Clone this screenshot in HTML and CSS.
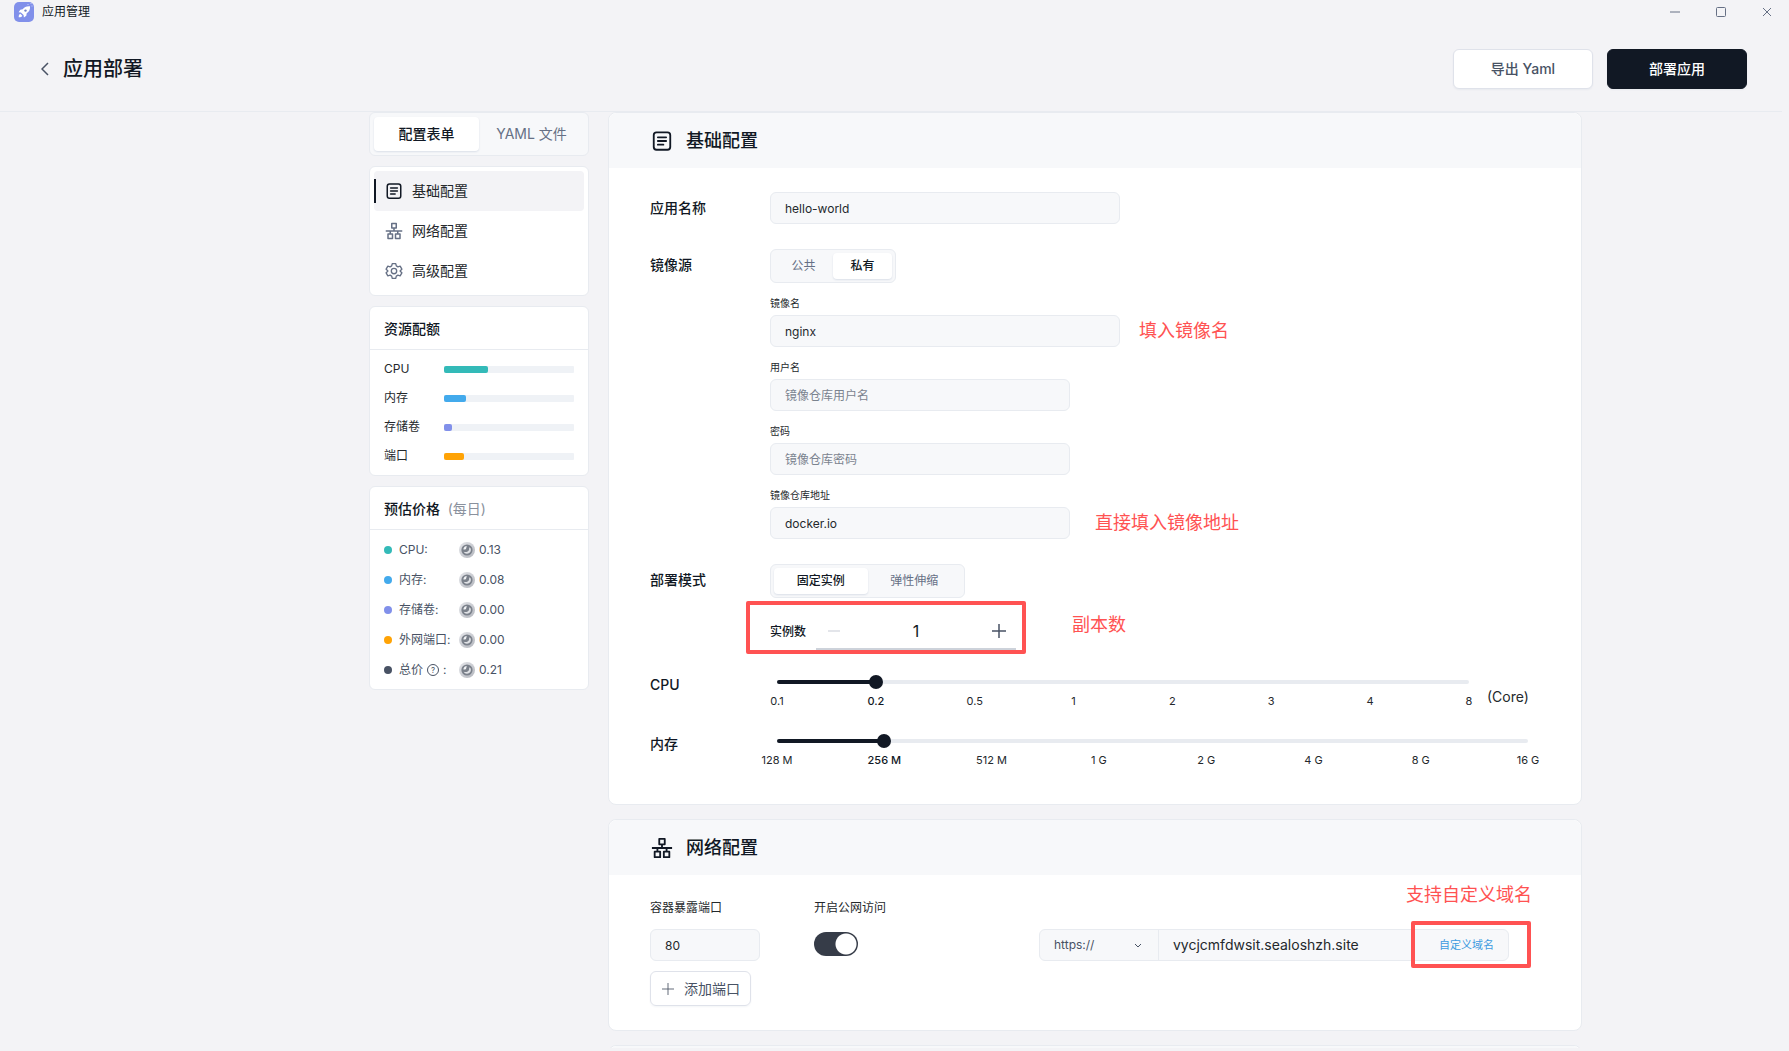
FILE: index.html
```html
<!DOCTYPE html>
<html lang="zh-CN">

<head>
   <meta charset="UTF-8">
   <meta name="viewport" content="width=device-width, initial-scale=1.0">
   <title>应用管理</title>
   <link rel="stylesheet" href="styles.css">
</head>

<body>
   <!-- shared icons -->
   <svg class="sprite" aria-hidden="true">
      <defs>
         <linearGradient id="coin-rim" x1="0" y1="0" x2="1" y2="1">
            <stop offset="0" stop-color="#e4e5e9"/>
            <stop offset="1" stop-color="#b3b6bd"/>
         </linearGradient>
      </defs>
      <symbol id="icon-form" viewBox="0 0 24 24" fill="none" stroke="currentColor" stroke-width="2" stroke-linecap="round">
         <rect x="3" y="2.5" width="18" height="19" rx="3"/>
         <path d="M7.5 8h9M7.5 12h9M7.5 16h6"/>
      </symbol>
      <symbol id="icon-network" viewBox="0 0 24 24" fill="none" stroke="currentColor" stroke-width="2" stroke-linejoin="round">
         <rect x="9" y="2" width="6" height="6"/>
         <rect x="4" y="16" width="6" height="6"/>
         <rect x="14" y="16" width="6" height="6"/>
         <path d="M12 8v4M1 12h22M7 12v4M17 12v4"/>
      </symbol>
      <symbol id="icon-gear" viewBox="0 0 24 24" fill="none" stroke="currentColor" stroke-width="1.8" stroke-linejoin="round">
         <path d="M9.7 2.2h4.6l.8 3 2.1 1.2 3-.8 2.3 4-2.2 2.1v.6l2.2 2.1-2.3 4-3-.8-2.1 1.2-.8 3H9.700l-.8-3-2.100-1.200-3 .8-2.300-4 2.200-2.100v-.6L1.500 9.600l2.300-4 3 .8 2.100-1.200z"/>
         <circle cx="12" cy="12" r="3.600"/>
      </symbol>
      <symbol id="icon-coin" viewBox="0 0 16 16">
         <circle cx="8" cy="8" r="8" fill="url(#coin-rim)"/>
         <circle cx="8" cy="8" r="5.6" fill="#7b818b"/>
         <path d="M4.300 7.300C4.700 5.200 6.200 4 7.800 4c-.5 1.200-.2 2-.9 2.900-.7.800-1.700.9-2.600.4z" fill="#f1f2f4"/>
         <path d="M11.700 6.500c.8 3-1.100 5.200-3.700 5.200-1.500 0-2.700-.8-3.300-2 2 .7 3.800.4 4.800-.9.800-1 .9-2.200.5-3.400.8.100 1.300.5 1.700 1.100z" fill="#dfe1e5"/>
      </symbol>
      <symbol id="icon-plus" viewBox="0 0 14 14" fill="none" stroke="currentColor">
         <path d="M0 7h14M7 0v14"/>
      </symbol>
   </svg>

   <div class="app">
      <div class="titlebar">
         <svg class="logo" viewBox="0 0 20 20">
            <rect width="20" height="20" rx="5" fill="#8190ea"/>
            <path d="M16 4.200c-3.400-.3-5.700.8-7.300 3.100l-2.400.4-1.700 2.500 2.300.2 2.700 2.700.3 2.400 2.400-1.800.4-2.400C15.200 9.700 16.300 7.500 16 4.200z" fill="#fff"/>
            <circle cx="11.500" cy="8.600" r="1.200" fill="#7181c5"/>
            <path d="M6.300 11.700c-1.200.4-1.600 1.700-1.600 3.600 1.900 0 3.200-.4 3.600-1.600z" fill="#fff"/>
            <path d="M13.500 2.500h1M16.500 1.500h1M17.500 4h1" stroke="#c8cff7"/>
         </svg>
         <span class="app-name">应用管理</span>
         <div class="window-buttons">
            <button aria-label="最小化"><svg viewBox="0 0 10 10"><path d="M0 5h10"/></svg></button>
            <button aria-label="最大化"><svg viewBox="0 0 10 10"><rect x=".5" y=".5" width="9" height="9" rx="1"/></svg></button>
            <button aria-label="关闭"><svg viewBox="0 0 10 10"><path d="M1 1l8 8M9 1l-8 8"/></svg></button>
         </div>
      </div>

      <header class="header">
         <button class="back" aria-label="返回"><svg viewBox="0 0 8 14"><path d="M7 1L1 7l6 6"/></svg></button>
         <h1>应用部署</h1>
         <button class="btn">导出 Yaml</button>
         <button class="btn btn-dark">部署应用</button>
      </header>

      <div class="content">
         <aside class="sidebar">
            <div class="tabs tabs-big">
               <button class="active">配置表单</button>
               <button>YAML 文件</button>
            </div>

            <nav class="box menu">
               <a href="#base" class="active"><svg><use href="#icon-form"/></svg>基础配置</a>
               <a href="#network"><svg><use href="#icon-network"/></svg>网络配置</a>
               <a href="#advanced"><svg><use href="#icon-gear"/></svg>高级配置</a>
            </nav>

            <div class="box">
               <h2>资源配额</h2>
               <div class="quota">
                  <div class="quota-row"><span>CPU</span><div class="bar"><div class="bar-fill cpu" style="width: 34%"></div></div></div>
                  <div class="quota-row"><span>内存</span><div class="bar"><div class="bar-fill memory" style="width: 17%"></div></div></div>
                  <div class="quota-row"><span>存储卷</span><div class="bar"><div class="bar-fill storage" style="width: 6%"></div></div></div>
                  <div class="quota-row"><span>端口</span><div class="bar"><div class="bar-fill port" style="width: 15%"></div></div></div>
               </div>
            </div>

            <div class="box">
               <h2>预估价格 <small>(每日)</small></h2>
               <div class="price">
                  <div class="price-row"><i class="dot cpu"></i><span>CPU:</span><svg><use href="#icon-coin"/></svg>0.13</div>
                  <div class="price-row"><i class="dot memory"></i><span>内存:</span><svg><use href="#icon-coin"/></svg>0.08</div>
                  <div class="price-row"><i class="dot storage"></i><span>存储卷:</span><svg><use href="#icon-coin"/></svg>0.00</div>
                  <div class="price-row"><i class="dot port"></i><span>外网端口:</span><svg><use href="#icon-coin"/></svg>0.00</div>
                  <div class="price-row"><i class="dot total"></i><span>总价<b class="help">?</b>:</span><svg><use href="#icon-coin"/></svg>0.21</div>
               </div>
            </div>
         </aside>

         <main class="main">
            <section class="card" id="base">
               <h2 class="card-title"><svg><use href="#icon-form"/></svg>基础配置</h2>
               <div class="form">
                  <div class="row">
                     <label class="row-label" for="name">应用名称</label>
                     <input class="text wide" id="name" type="text" value="hello-world">
                  </div>

                  <div class="row">
                     <span class="row-label">镜像源</span>
                     <div>
                        <div class="tabs">
                           <button>公共</button>
                           <button class="active">私有</button>
                        </div>
                        <div class="field">
                           <label for="image">镜像名</label>
                           <div class="field-line">
                              <input class="text wide" id="image" type="text" value="nginx">
                              <span class="note">填入镜像名</span>
                           </div>
                        </div>
                        <div class="field">
                           <label for="user">用户名</label>
                           <input class="text" id="user" type="text" placeholder="镜像仓库用户名">
                        </div>
                        <div class="field">
                           <label for="password">密码</label>
                           <input class="text" id="password" type="password" placeholder="镜像仓库密码">
                        </div>
                        <div class="field">
                           <label for="registry">镜像仓库地址</label>
                           <div class="field-line far">
                              <input class="text" id="registry" type="text" value="docker.io">
                              <span class="note">直接填入镜像地址</span>
                           </div>
                        </div>
                     </div>
                  </div>

                  <div class="row">
                     <span class="row-label">部署模式</span>
                     <div>
                        <div class="tabs tabs-mode">
                           <button class="active">固定实例</button>
                           <button>弹性伸缩</button>
                        </div>
                        <div class="count">
                           <label for="count">实例数</label>
                           <div class="stepper">
                              <button class="minus" aria-label="减少" disabled></button>
                              <input id="count" type="text" value="1">
                              <button aria-label="增加"><svg><use href="#icon-plus"/></svg></button>
                           </div>
                           <div class="mark"></div>
                           <span class="note">副本数</span>
                        </div>
                     </div>
                  </div>

                  <div class="row row-slider">
                     <label class="row-label" for="cpu">CPU</label>
                     <div class="slider-line">
                        <div class="slider">
                           <div class="track"><div class="track-fill" style="width: 14.28%"></div></div>
                           <input id="cpu" type="range" min="0" max="7" value="1">
                           <div class="ticks">
                              <span>0.1</span><span class="active">0.2</span><span>0.5</span><span>1</span><span>2</span><span>3</span><span>4</span><span>8</span>
                           </div>
                        </div>
                        <span class="unit">(Core)</span>
                     </div>
                  </div>

                  <div class="row row-slider">
                     <label class="row-label" for="memory">内存</label>
                     <div class="slider-line">
                        <div class="slider">
                           <div class="track"><div class="track-fill" style="width: 14.28%"></div></div>
                           <input id="memory" type="range" min="0" max="7" value="1">
                           <div class="ticks">
                              <span>128 M</span><span class="active">256 M</span><span>512 M</span><span>1 G</span><span>2 G</span><span>4 G</span><span>8 G</span><span>16 G</span>
                           </div>
                        </div>
                     </div>
                  </div>
               </div>
            </section>

            <section class="card" id="network">
               <h2 class="card-title"><svg><use href="#icon-network"/></svg>网络配置</h2>
               <div class="network">
                  <div class="ports">
                     <div class="port-field">
                        <label for="port">容器暴露端口</label>
                        <input class="text" id="port" type="text" value="80">
                     </div>
                     <div class="public-field">
                        <label for="public">开启公网访问</label>
                        <input class="switch" id="public" type="checkbox" checked>
                     </div>
                     <div class="domain">
                        <div class="protocol">
                           <select aria-label="协议">
                              <option>https://</option>
                              <option>grpcs://</option>
                              <option>wss://</option>
                           </select>
                           <svg viewBox="0 0 8 8"><path d="M1 3l3 3 3-3"/></svg>
                        </div>
                        <span class="host">vycjcmfdwsit.sealoshzh.site</span>
                        <div class="custom">
                           <a href="#domain">自定义域名</a>
                           <div class="mark"></div>
                           <span class="note">支持自定义域名</span>
                        </div>
                     </div>
                  </div>
                  <button class="add"><svg><use href="#icon-plus"/></svg>添加端口</button>
               </div>
            </section>

            <section class="card" id="advanced">
               <div class="card-title"></div>
            </section>
         </main>
      </div>
   </div>
</body>

</html>
```
FILE: styles.css
```css
* {
   margin: 0;
   padding: 0;
   box-sizing: border-box;
}

body {
   background: #f3f3f6;
   color: #24282c;
   font-family: Inter, "Noto Sans CJK SC", sans-serif;
   font-size: 12px;
   line-height: 18px;
}

button,
input,
select {
   font-family: inherit;
   line-height: inherit;
   color: inherit;
   border: none;
   background: none;
   outline: none;
}

button {
   cursor: pointer;
}

.sprite {
   position: absolute;
   width: 0;
   height: 0;
}

.app {
   display: flex;
   flex-direction: column;
   height: 100vh;
   padding-bottom: 3px;
}

/* window bar */
.titlebar {
   display: flex;
   align-items: center;
   height: 24px;
   flex-shrink: 0;
   padding: 0 17px 0 14px;
}

.logo {
   width: 20px;
   height: 20px;
}

.app-name {
   margin-left: 8px;
   color: #111824;
}

.window-buttons {
   display: flex;
   gap: 36px;
   margin-left: auto;
}

.window-buttons button {
   width: 10px;
   height: 10px;
}

.window-buttons svg {
   display: block;
   width: 10px;
   height: 10px;
   fill: none;
   stroke: #667085;
}

/* header */
.header {
   display: flex;
   align-items: center;
   flex-shrink: 0;
   margin-right: 7px;
   padding: 25px 35px 22px 41px;
   border-bottom: 1px solid #e8ebf0;
}

.back svg {
   display: block;
   width: 8px;
   height: 14px;
   fill: none;
   stroke: #485264;
   stroke-width: 1.5;
}

.header h1 {
   margin-left: 14px;
   margin-right: auto;
   font-size: 20px;
   line-height: 28px;
   font-weight: 500;
   color: #111824;
}

.btn {
   width: 140px;
   height: 40px;
   border: 1px solid #dfe2ea;
   border-radius: 6px;
   background: #fff;
   color: #485264;
   font-size: 14px;
   font-weight: 500;
   box-shadow: 0 1px 2px rgba(19, 51, 107, 0.05);
}

.btn-dark {
   margin-left: 14px;
   border-color: #111824;
   background: #111824;
   color: #fff;
}

.content {
   display: grid;
   grid-template-columns: minmax(16px, 369fr) 220px minmax(0, 993fr) minmax(16px, 207fr);
   flex: 1;
   min-height: 0;
   overflow: hidden;
}

/* sidebar */
.sidebar {
   grid-column: 2;
   display: flex;
   flex-direction: column;
   gap: 10px;
}

.tabs {
   display: flex;
   width: 126px;
   height: 34px;
   padding: 3px;
   border: 1px solid #e8ebf0;
   border-radius: 6px;
   background: #f7f8fa;
}

.tabs button {
   flex: 1;
   border-radius: 4px;
   color: #667085;
   font-size: 12px;
}

.tabs .active {
   background: #fff;
   color: #111824;
   font-weight: 500;
   box-shadow: 0 1px 2px rgba(19, 51, 107, 0.12);
}

.tabs-mode {
   width: 195px;
}

.tabs-big {
   width: 100%;
   height: 44px;
   padding: 4px;
}

.tabs-big button {
   font-size: 14px;
}

.box {
   border: 1px solid #e8ebf0;
   border-radius: 6px;
   background: #fff;
}

.menu {
   padding: 4px;
}

.menu a {
   display: flex;
   align-items: center;
   gap: 9px;
   height: 40px;
   padding-left: 11px;
   border-radius: 4px;
   color: #24282c;
   font-size: 14px;
   text-decoration: none;
}

.menu svg {
   width: 18px;
   height: 18px;
   color: #667085;
}

.menu .active {
   background: linear-gradient(#111824, #111824) left center / 2px 24px no-repeat #f3f3f6;
}

.menu .active svg {
   color: #111824;
}

.box h2 {
   padding: 12px 14px 10px;
   border-bottom: 1px solid #e8ebf0;
   color: #111824;
   font-size: 14px;
   line-height: 20px;
   font-weight: 500;
}

.box small {
   margin-left: 4px;
   color: #8a919d;
   font-size: 14px;
   font-weight: 400;
}

.quota {
   display: flex;
   flex-direction: column;
   gap: 11px;
   padding: 10px 14px;
}

.quota-row {
   display: flex;
   align-items: center;
}

.quota-row span {
   width: 60px;
}

.bar {
   flex: 1;
   height: 7px;
   border-radius: 1px;
   background: #eff2f6;
}

.bar-fill {
   height: 7px;
   border-radius: 2px;
}

.cpu {
   background: #33bab8;
}

.memory {
   background: #43aaec;
}

.storage {
   background: #8190ea;
}

.port {
   background: #ffa305;
}

.total {
   background: #485264;
}

.price {
   padding: 5px 14px 4px;
}

.price-row {
   display: flex;
   align-items: center;
   height: 30px;
   color: #485264;
}

.price-row span {
   display: flex;
   align-items: center;
   width: 60px;
   margin-left: 7px;
   white-space: nowrap;
}

.price-row svg {
   width: 16px;
   height: 16px;
   margin-right: 4px;
}

.dot {
   width: 8px;
   height: 8px;
   border-radius: 50%;
}

.help {
   width: 12px;
   height: 12px;
   margin: 0 4px;
   border: 1px solid #485264;
   border-radius: 50%;
   font-size: 8px;
   line-height: 10px;
   font-weight: 400;
   text-align: center;
}

/* main cards */
.main {
   display: flex;
   flex-direction: column;
   gap: 14px;
   margin-left: 19px;
}

.card {
   border: 1px solid #e8ebf0;
   border-radius: 8px;
   background: #fff;
}

.card-title {
   display: flex;
   align-items: center;
   gap: 12px;
   height: 55px;
   padding-left: 41px;
   border-radius: 8px 8px 0 0;
   background: #f7f8fa;
   color: #111824;
   font-size: 18px;
   font-weight: 500;
}

.card-title svg {
   width: 24px;
   height: 24px;
   padding: 1px;
}

.form {
   display: flex;
   flex-direction: column;
   gap: 25px;
   padding: 24px 46px 36px 41px;
}

.row {
   display: grid;
   grid-template-columns: 120px minmax(0, 1fr);
}

.row-label {
   color: #111824;
   font-size: 14px;
   line-height: 32px;
   font-weight: 500;
}

.row-slider {
   min-height: 34px;
   align-items: start;
}

.row-slider .row-label {
   line-height: 20px;
}

.text {
   display: block;
   width: 300px;
   height: 32px;
   padding: 0 14px;
   border: 1px solid #e8ebf0;
   border-radius: 6px;
   background: #f7f8fa;
   font-size: 12px;
}

.text::placeholder {
   color: #7b838f;
}

.text.wide {
   width: 350px;
}

.field {
   margin-top: 12px;
}

.field label {
   display: block;
   margin-bottom: 4px;
   font-size: 10px;
   line-height: 16px;
}

.field-line {
   display: flex;
   align-items: center;
   gap: 19px;
}

.field-line.far {
   gap: 25px;
}

/* red annotations */
.note {
   color: #ff5252;
   font-size: 18px;
   line-height: 26px;
   white-space: nowrap;
}

.mark {
   position: absolute;
   border: 4px solid #ff5252;
   border-radius: 2px;
   pointer-events: none;
}

.count {
   position: relative;
   display: flex;
   align-items: center;
   gap: 10px;
   margin-top: 16px;
   color: #111824;
   font-weight: 500;
}

.count .mark {
   top: -13px;
   left: -24px;
   width: 280px;
   height: 53px;
}

.count .note {
   position: absolute;
   top: -2px;
   left: 302px;
   font-weight: 400;
}

.stepper {
   display: flex;
   align-items: center;
   width: 200px;
   height: 36px;
   border-bottom: 2px solid #cdd2da;
}

.stepper input {
   flex: 1;
   min-width: 0;
   font-size: 16px;
   text-align: center;
}

.stepper button {
   width: 34px;
   height: 34px;
   color: #485264;
}

.stepper svg {
   display: block;
   width: 14px;
   height: 14px;
   margin: auto;
   stroke-width: 1.5;
}

.stepper .minus {
   background: linear-gradient(#e3e5ea, #e3e5ea) 12px center / 12px 2px no-repeat;
}

/* sliders */
.slider-line {
   display: flex;
   align-items: flex-end;
   gap: 11px;
}

.slider {
   display: grid;
   flex: 1;
   row-gap: 5px;
}

.track {
   grid-area: 1 / 1;
   align-self: center;
   height: 4px;
   margin: 0 7px;
   border-radius: 2px;
   background: #e8ebf0;
}

.track-fill {
   height: 4px;
   border-radius: 2px;
   background: #111824;
}

.slider input {
   grid-area: 1 / 1;
   width: 100%;
   height: 14px;
   appearance: none;
}

.slider input::-webkit-slider-thumb {
   appearance: none;
   width: 14px;
   height: 14px;
   border-radius: 50%;
   background: #111824;
}

.ticks {
   display: flex;
   justify-content: space-between;
   margin: 0 7px;
   color: #24282c;
   font-size: 11px;
   line-height: 14px;
   white-space: nowrap;
}

.ticks span {
   display: flex;
   justify-content: center;
   width: 0;
}

.ticks .active {
   color: #111824;
   font-weight: 500;
}

.unit {
   width: 48px;
   font-size: 14px;
   line-height: 22px;
}

/* network */
.network {
   padding: 24px 72px 24px 41px;
}

.ports {
   display: flex;
   align-items: flex-end;
}

.port-field,
.public-field {
   display: flex;
   flex-direction: column;
   gap: 12px;
}

.port-field {
   width: 164px;
}

.port-field .text {
   width: 110px;
}

.public-field {
   width: 225px;
}

.switch {
   width: 44px;
   height: 24px;
   margin: 3px 0 5px;
   border-radius: 12px;
   background: radial-gradient(circle at 32px 12px, #fff 10px, #363c48 11px);
   appearance: none;
}

.domain {
   display: flex;
   align-items: center;
   flex: 1;
   height: 32px;
   border: 1px solid #e8ebf0;
   border-radius: 6px;
   background: #f7f8fa;
}

.protocol {
   display: flex;
   align-items: center;
   width: 119px;
   height: 30px;
   border-right: 1px solid #e8ebf0;
}

.protocol select {
   width: 118px;
   height: 30px;
   padding-left: 14px;
   color: #485264;
   font-size: 12px;
   appearance: none;
}

.protocol svg {
   width: 8px;
   height: 8px;
   margin-left: -24px;
   fill: none;
   stroke: #485264;
   pointer-events: none;
}

.host {
   flex: 1;
   padding-left: 14px;
   font-size: 14px;
}

.custom {
   position: relative;
   padding-right: 14px;
}

.custom a {
   color: #3d9be0;
   font-size: 11px;
   text-decoration: none;
}

.custom .mark {
   top: -15px;
   right: -23px;
   width: 120px;
   height: 47px;
}

.custom .note {
   position: absolute;
   right: -24px;
   bottom: 46px;
}

.add {
   display: flex;
   align-items: center;
   gap: 10px;
   height: 35px;
   margin-top: 10px;
   padding: 0 10px 0 11px;
   border: 1px solid #dfe2ea;
   border-radius: 6px;
   color: #485264;
   font-size: 14px;
   box-shadow: 0 1px 2px rgba(19, 51, 107, 0.05);
}

.add svg {
   width: 12px;
   height: 12px;
}
```
